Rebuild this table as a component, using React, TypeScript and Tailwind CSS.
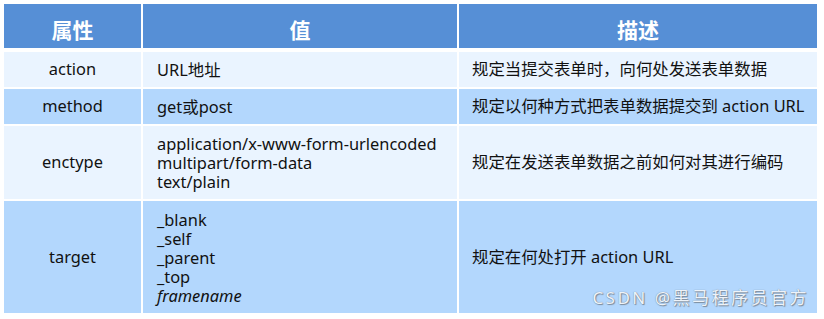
const FONT = "font-['Noto_Sans','Noto_Sans_CJK_SC',sans-serif]"

const COLS = 'grid grid-cols-[137px_314px_358px] gap-x-[2px]'

type Row = {
  name: string
  values: { text: string; italic?: boolean }[]
  desc: string
  h: string
  bg: string
}

const ROWS: Row[] = [
  { name: 'action', values: [{ text: 'URL地址' }], desc: '规定当提交表单时，向何处发送表单数据', h: 'h-[35px]', bg: 'bg-[#eaf4ff]' },
  { name: 'method', values: [{ text: 'get或post' }], desc: '规定以何种方式把表单数据提交到 action URL', h: 'h-[35px]', bg: 'bg-[#b3d7fd]' },
  {
    name: 'enctype',
    values: [
      { text: 'application/x-www-form-urlencoded' },
      { text: 'multipart/form-data' },
      { text: 'text/plain' },
    ],
    desc: '规定在发送表单数据之前如何对其进行编码',
    h: 'h-[73px]',
    bg: 'bg-[#eaf4ff]',
  },
  {
    name: 'target',
    values: [
      { text: '_blank' },
      { text: '_self' },
      { text: '_parent' },
      { text: '_top' },
      { text: 'framename', italic: true },
    ],
    desc: '规定在何处打开 action URL',
    h: 'h-[112px]',
    bg: 'bg-[#b3d7fd]',
  },
]

export default function App() {
  return (
    <div className={`relative w-[824px] h-[319px] bg-white p-[4px] ${FONT} text-[16.4px] text-[#111]`}>
      <div className="flex flex-col gap-y-[2px]">
        <div className={`${COLS} h-[44px] mb-[2px] text-[21px] font-bold text-white`}>
          <div className="flex items-center justify-center bg-[#568fd6] pt-[10px]">属性</div>
          <div className="flex items-center justify-center bg-[#568fd6] pt-[10px]">值</div>
          <div className="flex items-center justify-center bg-[#568fd6] pt-[10px]">描述</div>
        </div>
        {ROWS.map((r) => (
          <div key={r.name} className={`${COLS} ${r.h}`}>
            <div className={`flex items-center justify-center ${r.bg}`}>{r.name}</div>
            <div className={`flex flex-col justify-center pl-[14px] leading-[19px] ${r.bg}`}>
              {r.values.map((v) => (
                <span key={v.text} className={v.italic ? 'italic' : ''}>
                  {v.text}
                </span>
              ))}
            </div>
            <div className={`flex items-center pl-[13px] ${r.bg}`}>{r.desc}</div>
          </div>
        ))}
      </div>
      <div className="absolute right-[15px] bottom-[9px] text-[17px] tracking-[2.5px] text-[#eef3f9] [text-shadow:0_0_1px_#6b7a8c,1px_1px_1px_#7d8a99]">
        CSDN @黑马程序员官方
      </div>
    </div>
  )
}
